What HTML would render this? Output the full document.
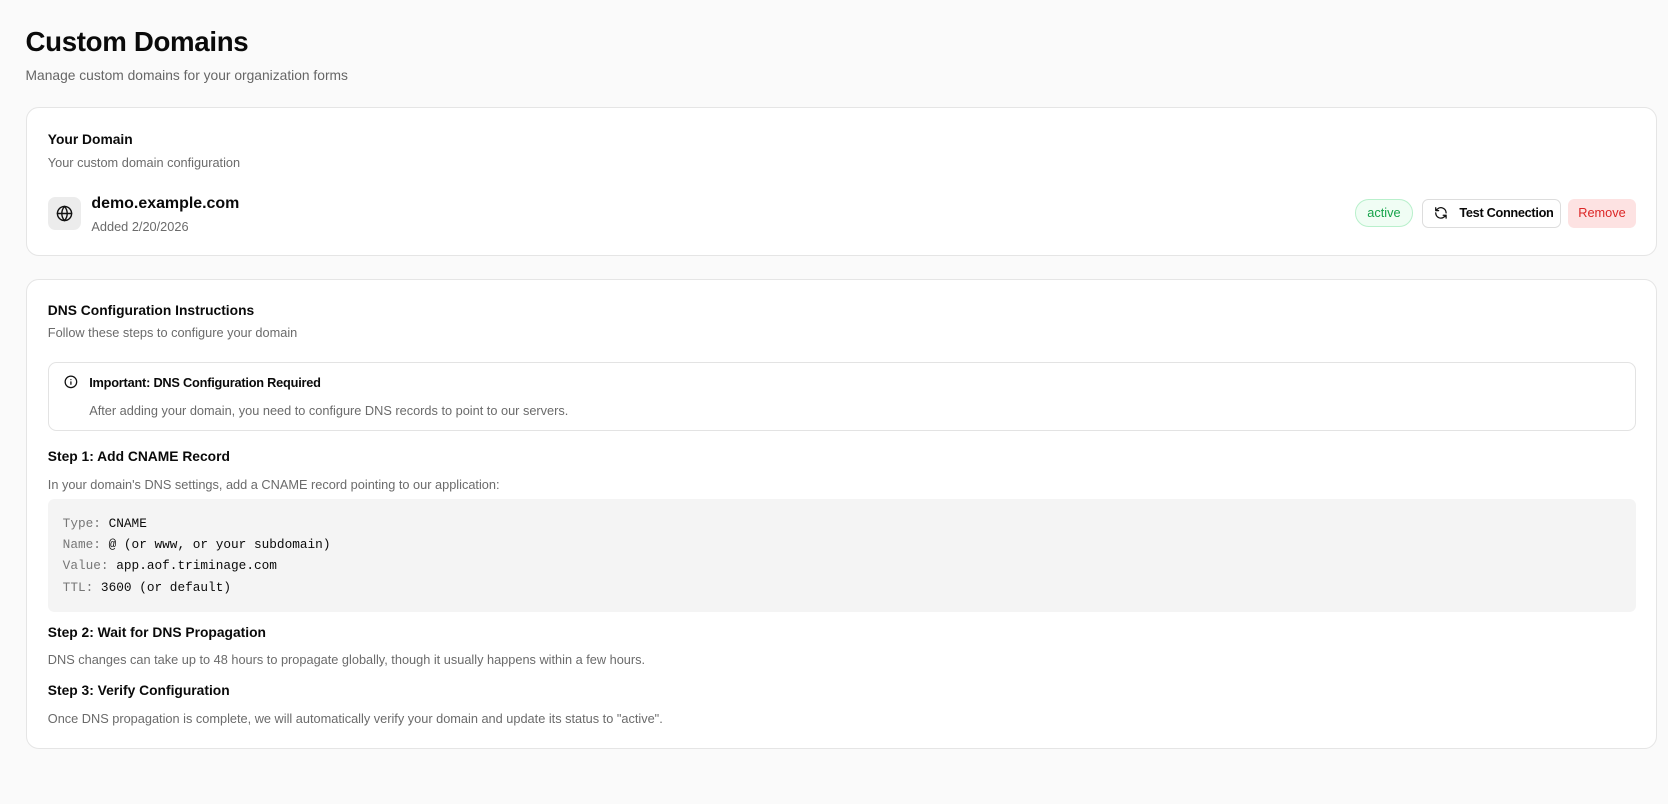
<!DOCTYPE html>
<html><head><meta charset="utf-8"><style>
*{box-sizing:border-box;margin:0;padding:0}
html,body{width:1668px;height:804px;overflow:hidden}
body{background:#fafafa;font-family:"Liberation Sans",sans-serif;color:#0a0a0a}
#w{position:relative;width:1568px;height:756px;zoom:1.0638}
.abs{position:absolute}
h1{position:absolute;left:24px;top:24px;font-size:26px;font-weight:700;letter-spacing:-0.3px}
.sub{left:24px;top:63px;font-size:13px;color:#666}
.card{position:absolute;left:24px;width:1534px;background:#fff;border:1px solid #e5e5e5;border-radius:12px}
.t{font-size:13px;font-weight:700}
.m{font-size:12px;color:#6b6b6b}
.mono{font-family:"Liberation Mono",monospace;font-size:12px;line-height:20px}
.mono span{color:#777}
</style></head><body><div id="w">
<h1>Custom Domains</h1>
<div class="abs sub">Manage custom domains for your organization forms</div>

<div class="card" style="top:101px;height:140px">
  <div class="abs t" style="left:20px;top:21px">Your Domain</div>
  <div class="abs m" style="left:20px;top:44px">Your custom domain configuration</div>
  <div class="abs" style="left:20px;top:83px;width:31px;height:31px;border-radius:7px;background:#ececec;display:flex;align-items:center;justify-content:center">
    <svg width="16" height="16" viewBox="0 0 24 24" fill="none" stroke="#111" stroke-width="2" stroke-linecap="round"><circle cx="12" cy="12" r="10"/><path d="M2 12h20M12 2a15 15 0 0 1 0 20M12 2a15 15 0 0 0 0 20"/></svg>
  </div>
  <div class="abs" style="left:61px;top:81px;font-size:15px;font-weight:700">demo.example.com</div>
  <div class="abs m" style="left:61px;top:104px">Added 2/20/2026</div>
  <div class="abs" style="left:1249px;top:85px;width:54px;height:26px;border:1px solid #b9f0cc;background:#f0fdf4;border-radius:13px;color:#16a34a;font-size:12px;text-align:center;line-height:24px">active</div>
  <div class="abs" style="left:1312px;top:85px;width:130px;height:27px;border:1px solid #ddd;border-radius:6px;font-size:12px;font-weight:700;line-height:25px;padding-left:34px;white-space:nowrap;letter-spacing:-0.3px">
    <svg class="abs" style="left:10px;top:6px" width="13" height="13" viewBox="0 0 24 24" fill="none" stroke="#111" stroke-width="2.2" stroke-linecap="round" stroke-linejoin="round"><path d="M21 12a9 9 0 0 0-15-6.7L3 8M3 3v5h5M3 12a9 9 0 0 0 15 6.7L21 16M21 21v-5h-5"/></svg>Test Connection</div>
  <div class="abs" style="left:1449px;top:85px;width:64px;height:27px;background:#fde2e2;border-radius:6px;color:#dc2626;font-size:12px;text-align:center;line-height:27px">Remove</div>
</div>

<div class="card" style="top:262px;height:442px">
  <div class="abs t" style="left:20px;top:21px">DNS Configuration Instructions</div>
  <div class="abs m" style="left:20px;top:43px">Follow these steps to configure your domain</div>
  <div class="abs" style="left:20px;top:77px;width:1493px;height:65px;border:1px solid #e3e3e3;border-radius:8px">
    <svg class="abs" style="left:14px;top:12px" width="13" height="13" viewBox="0 0 24 24" fill="none" stroke="#111" stroke-width="2.2" stroke-linecap="round"><circle cx="12" cy="12" r="10"/><path d="M12 16v-4M12 8h.01"/></svg>
    <div class="abs" style="left:38px;top:12px;font-size:12px;font-weight:600;letter-spacing:-0.2px">Important: DNS Configuration Required</div>
    <div class="abs m" style="left:38px;top:38px">After adding your domain, you need to configure DNS records to point to our servers.</div>
  </div>
  <div class="abs t" style="left:20px;top:158px">Step 1: Add CNAME Record</div>
  <div class="abs m" style="left:20px;top:185px">In your domain's DNS settings, add a CNAME record pointing to our application:</div>
  <div class="abs mono" style="left:20px;top:206px;width:1493px;height:106px;background:#f4f4f4;border-radius:6px;padding:13px 14px">
    <div><span>Type:</span> CNAME</div>
    <div><span>Name:</span> @ (or www, or your subdomain)</div>
    <div><span>Value:</span> app.aof.triminage.com</div>
    <div><span>TTL:</span> 3600 (or default)</div>
  </div>
  <div class="abs t" style="left:20px;top:324px">Step 2: Wait for DNS Propagation</div>
  <div class="abs m" style="left:20px;top:350px">DNS changes can take up to 48 hours to propagate globally, though it usually happens within a few hours.</div>
  <div class="abs t" style="left:20px;top:378px">Step 3: Verify Configuration</div>
  <div class="abs m" style="left:20px;top:405px">Once DNS propagation is complete, we will automatically verify your domain and update its status to "active".</div>
</div>
</div></body></html>
